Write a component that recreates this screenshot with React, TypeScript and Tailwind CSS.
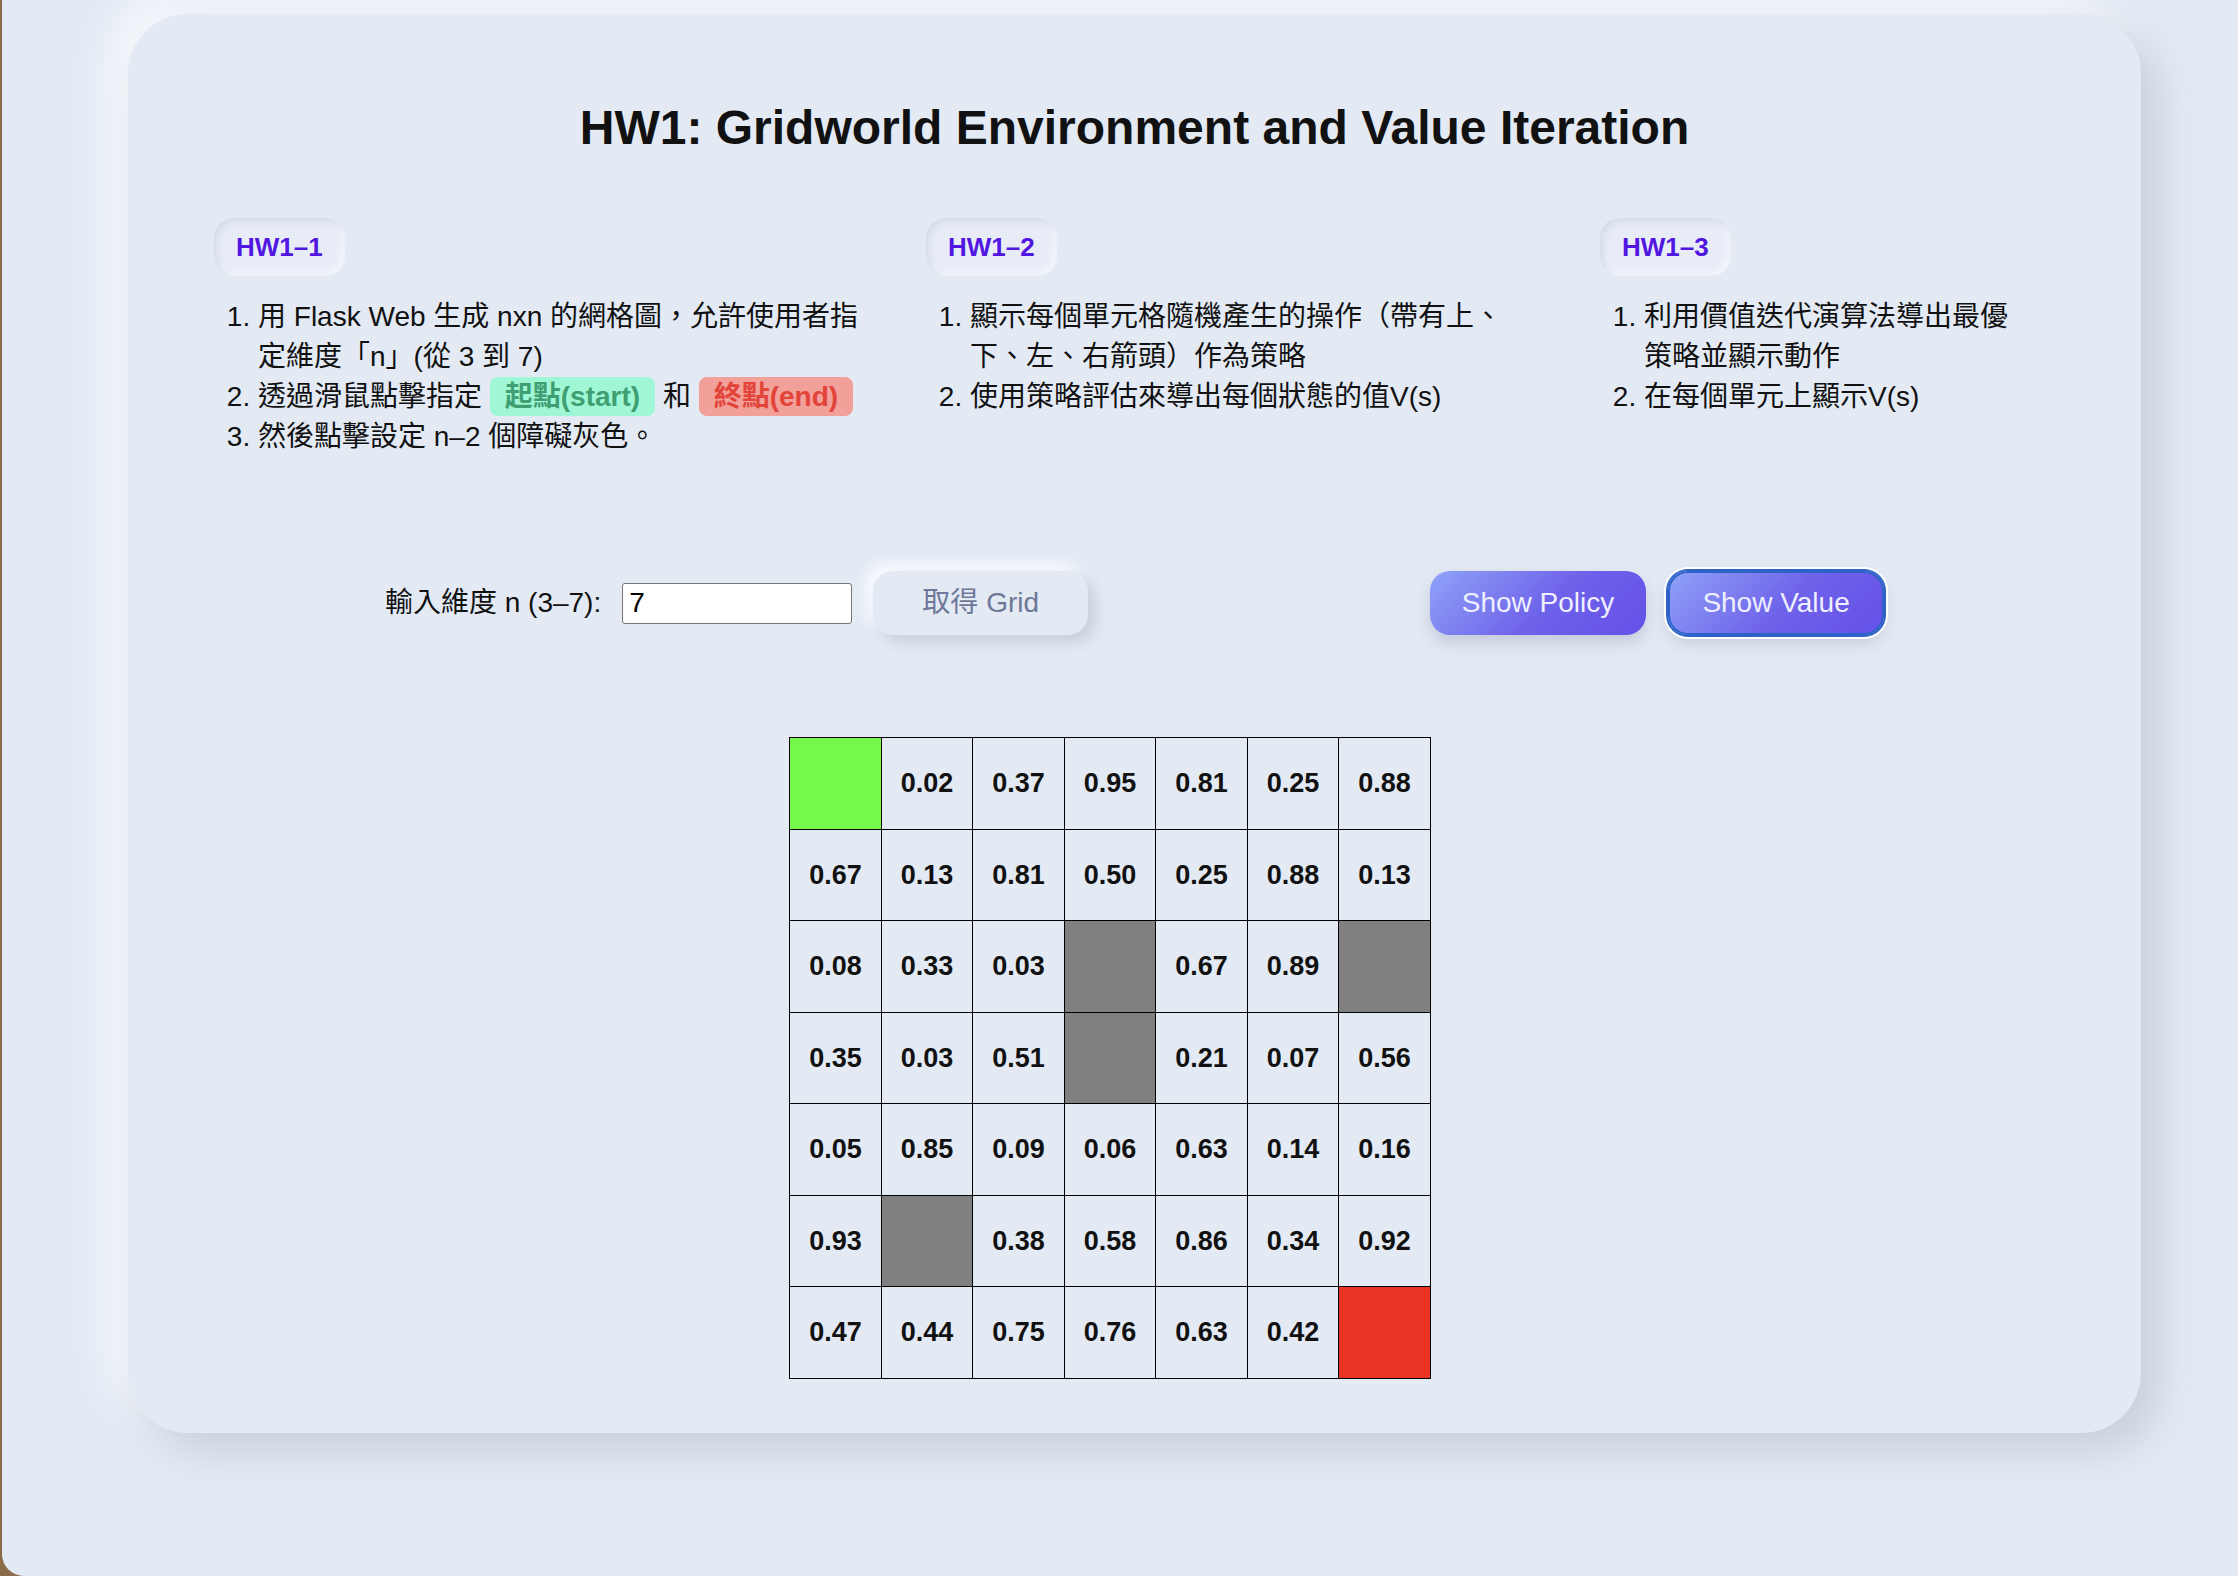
import { useState } from 'react';

const grid: string[][] = [
  ['start', '0.02', '0.37', '0.95', '0.81', '0.25', '0.88'],
  ['0.67', '0.13', '0.81', '0.50', '0.25', '0.88', '0.13'],
  ['0.08', '0.33', '0.03', 'wall', '0.67', '0.89', 'wall'],
  ['0.35', '0.03', '0.51', 'wall', '0.21', '0.07', '0.56'],
  ['0.05', '0.85', '0.09', '0.06', '0.63', '0.14', '0.16'],
  ['0.93', 'wall', '0.38', '0.58', '0.86', '0.34', '0.92'],
  ['0.47', '0.44', '0.75', '0.76', '0.63', '0.42', 'end'],
];

function Badge({ children }: { children: React.ReactNode }) {
  return (
    <div className="flex h-[58px] w-fit items-center rounded-[20px] bg-[#e7ecf7] px-[22px] text-[26px] font-bold text-[#5116e0] shadow-[inset_3px_3px_7px_#d3dae7,inset_-3px_-3px_7px_#f7f9fd]">
      {children}
    </div>
  );
}

function cellClass(v: string) {
  if (v === 'start') return 'bg-[#76f84b]';
  if (v === 'end') return 'bg-[#e93424]';
  if (v === 'wall') return 'bg-[#808080]';
  return '';
}

export default function App() {
  const [n, setN] = useState('7');
  const [view, setView] = useState<'policy' | 'value'>('value');

  return (
    <div className="h-[1576px] w-[2238px] overflow-hidden bg-[#8c6b4a]">
      <div className="ml-[2px] h-full rounded-bl-[22px] bg-[#e3eaf4] pl-[126px] pt-[14px] font-['Liberation_Sans','Noto_Sans_CJK_TC',sans-serif] text-[#111]">
        <div className="h-[1419px] w-[2013px] rounded-[60px] bg-[#e3eaf4] px-[86px] pt-[84px] shadow-[18px_18px_40px_#c9cfdb,-18px_-18px_40px_#f7f9fc]">
          <h1 className="text-center text-[48px] font-bold leading-[60px]">
            HW1: Gridworld Environment and Value Iteration
          </h1>

          <div className="mt-[60px] grid grid-cols-[712px_674px_1fr]">
            <div>
              <Badge>HW1–1</Badge>
              <ol className="mt-[21px] w-[659px] list-decimal pl-[44px] text-[28px] leading-[40px]">
                <li>用 Flask Web 生成 nxn 的網格圖，允許使用者指定維度「n」(從 3 到 7)</li>
                <li>
                  透過滑鼠點擊指定{' '}
                  <span className="rounded-[8px] bg-[#9ff7d6] px-[15px] py-[4px] font-bold text-[#3f9f72]">起點(start)</span>{' '}
                  和{' '}
                  <span className="rounded-[8px] bg-[#f2a09a] px-[15px] py-[4px] font-bold text-[#e2443a]">終點(end)</span>
                </li>
                <li>然後點擊設定 n–2 個障礙灰色。</li>
              </ol>
            </div>
            <div>
              <Badge>HW1–2</Badge>
              <ol className="mt-[21px] w-[590px] list-decimal pl-[44px] text-[28px] leading-[40px]">
                <li>顯示每個單元格隨機產生的操作（帶有上、下、左、右箭頭）作為策略</li>
                <li>使用策略評估來導出每個狀態的值V(s)</li>
              </ol>
            </div>
            <div>
              <Badge>HW1–3</Badge>
              <ol className="mt-[21px] w-[422px] list-decimal pl-[44px] text-[28px] leading-[40px]">
                <li>利用價值迭代演算法導出最優策略並顯示動作</li>
                <li>在每個單元上顯示V(s)</li>
              </ol>
            </div>
          </div>

          <div className="mt-[114px] flex items-center justify-around">
            <div className="flex items-center gap-[21px]">
              <label className="text-[28px]">輸入維度 n (3–7):</label>
              <input
                value={n}
                onChange={(e) => setN(e.target.value)}
                className="h-[41px] w-[230px] rounded-[3px] border border-[#767676] bg-white pl-[6px] text-[28px] text-black outline-none"
              />
              <button className="h-[64px] w-[215px] rounded-[20px] bg-[#e3eaf4] text-[28px] text-[#6e7898] shadow-[7px_7px_14px_#c8cedc,-7px_-7px_14px_#fbfcff]">
                取得 Grid
              </button>
            </div>
            <div className="flex items-center gap-[22px]">
              <button
                onClick={() => setView('policy')}
                className={`h-[64px] w-[216px] rounded-[20px] bg-[linear-gradient(135deg,#8fa3f7_0%,#6f62ea_55%,#6450e7_100%)] text-[28px] text-[#eef0ff] ${
                  view === 'policy'
                    ? 'shadow-[0_0_0_2px_#2d63c6,inset_0_0_0_2px_#2d63c6,0_0_0_4px_#fff,0_8px_16px_#c4cadb]'
                    : 'shadow-[0_8px_16px_#c4cadb]'
                }`}
              >
                Show Policy
              </button>
              <button
                onClick={() => setView('value')}
                className={`h-[64px] w-[216px] rounded-[20px] bg-[linear-gradient(135deg,#8fa3f7_0%,#6f62ea_55%,#6450e7_100%)] text-[28px] text-[#eef0ff] ${
                  view === 'value'
                    ? 'shadow-[0_0_0_2px_#2d63c6,inset_0_0_0_2px_#2d63c6,0_0_0_4px_#fff,0_8px_16px_#c4cadb]'
                    : 'shadow-[0_8px_16px_#c4cadb]'
                }`}
              >
                Show Value
              </button>
            </div>
          </div>

          <div className="mt-[102px] flex justify-center pr-[49px]">
            <div className="grid grid-cols-[repeat(7,91.5px)] border-l border-t border-black">
              {grid.flat().map((v, i) => (
                <div
                  key={i}
                  className={`flex h-[91.5px] items-center justify-center border-b border-r border-black text-[27px] font-bold ${cellClass(v)}`}
                >
                  {v === 'start' || v === 'end' || v === 'wall' ? '' : v}
                </div>
              ))}
            </div>
          </div>
        </div>
      </div>
    </div>
  );
}
